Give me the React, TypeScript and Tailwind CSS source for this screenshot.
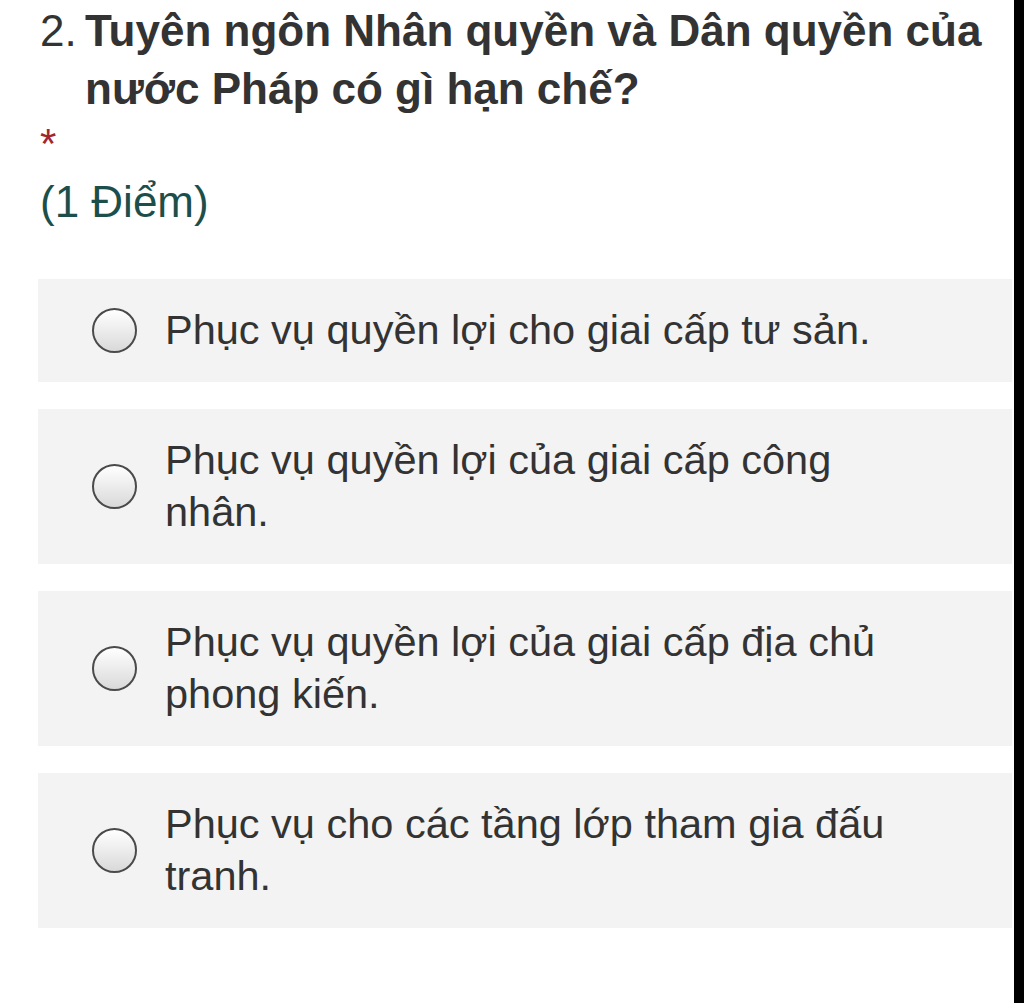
import React from 'react';

const options = [
    'Phục vụ quyền lợi cho giai cấp tư sản.',
    'Phục vụ quyền lợi của giai cấp công nhân.',
    'Phục vụ quyền lợi của giai cấp địa chủ phong kiến.',
    'Phục vụ cho các tầng lớp tham gia đấu tranh.',
];

const Radio: React.FC = () => (
    <span className="w-[45px] h-[45px] shrink-0 rounded-full border-2 border-[#4a4a4a] bg-gradient-to-b from-white to-[#d9d9d9]" />
);

export default function App() {
    return (
        <div className="flex w-[1024px] h-[1003px] bg-white font-['Liberation_Sans',Arial,sans-serif] text-[#333333]">
            <div className="flex-1 flex flex-col pt-[2px] pr-[2px]">
                {/* Question title */}
                <div className="flex pl-[40px] text-[44px] leading-[58px]">
                    <span className="w-[45px] shrink-0">2.</span>
                    <span className="font-bold">Tuyên ngôn Nhân quyền và Dân quyền của nước Pháp có gì hạn chế?</span>
                </div>
                <div className="pl-[40px] text-[42px] leading-[52px] text-[#a4262c]">*</div>
                <div className="pl-[40px] mt-[3px] text-[44px] leading-[58px] text-[#1d4f4a]">(1 Điểm)</div>

                {/* Choices */}
                <div className="flex flex-col gap-[27px] mt-[48px] ml-[38px]">
                    {options.map((opt, i) => (
                        <div key={i} className="flex items-center bg-[#f3f3f3] pl-[54px] py-[25px]">
                            <Radio />
                            <span className="ml-[28px] w-[740px] text-[41.5px] leading-[52.5px]">{opt}</span>
                        </div>
                    ))}
                </div>
            </div>
            <div className="w-[10px] bg-black" />
        </div>
    );
}
